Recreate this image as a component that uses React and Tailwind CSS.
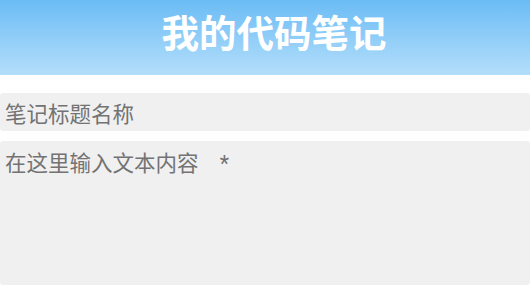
export default function App() {
  return (
    <div
      className="flex h-[285px] w-[530px] flex-col overflow-hidden bg-white"
      style={{ fontFamily: 'Roboto, "Noto Sans CJK SC", sans-serif' }}
    >
      <header className="flex h-[75px] shrink-0 items-center justify-center bg-gradient-to-b from-[#6abcf5] to-[#b3defa] pb-[6px] pl-[18px]">
        <h1 className="text-[37.5px] font-bold leading-none text-white">我的代码笔记</h1>
      </header>

      <input
        type="text"
        placeholder="笔记标题名称"
        className="mt-[18px] h-[38px] w-full shrink-0 rounded-[3px] bg-[#f0f0f0] px-[5px] pt-[5px] text-[21.5px] text-[#666] outline-none placeholder:text-[#737373]"
      />

      <textarea
        placeholder="在这里输入文本内容    *"
        className="mt-[10px] w-full flex-1 resize-none rounded-[3px] bg-[#f0f0f0] px-[5px] pt-[8px] pb-[6px] text-[21.5px] leading-[1.4] text-[#666] outline-none placeholder:text-[#737373]"
      />
    </div>
  );
}
